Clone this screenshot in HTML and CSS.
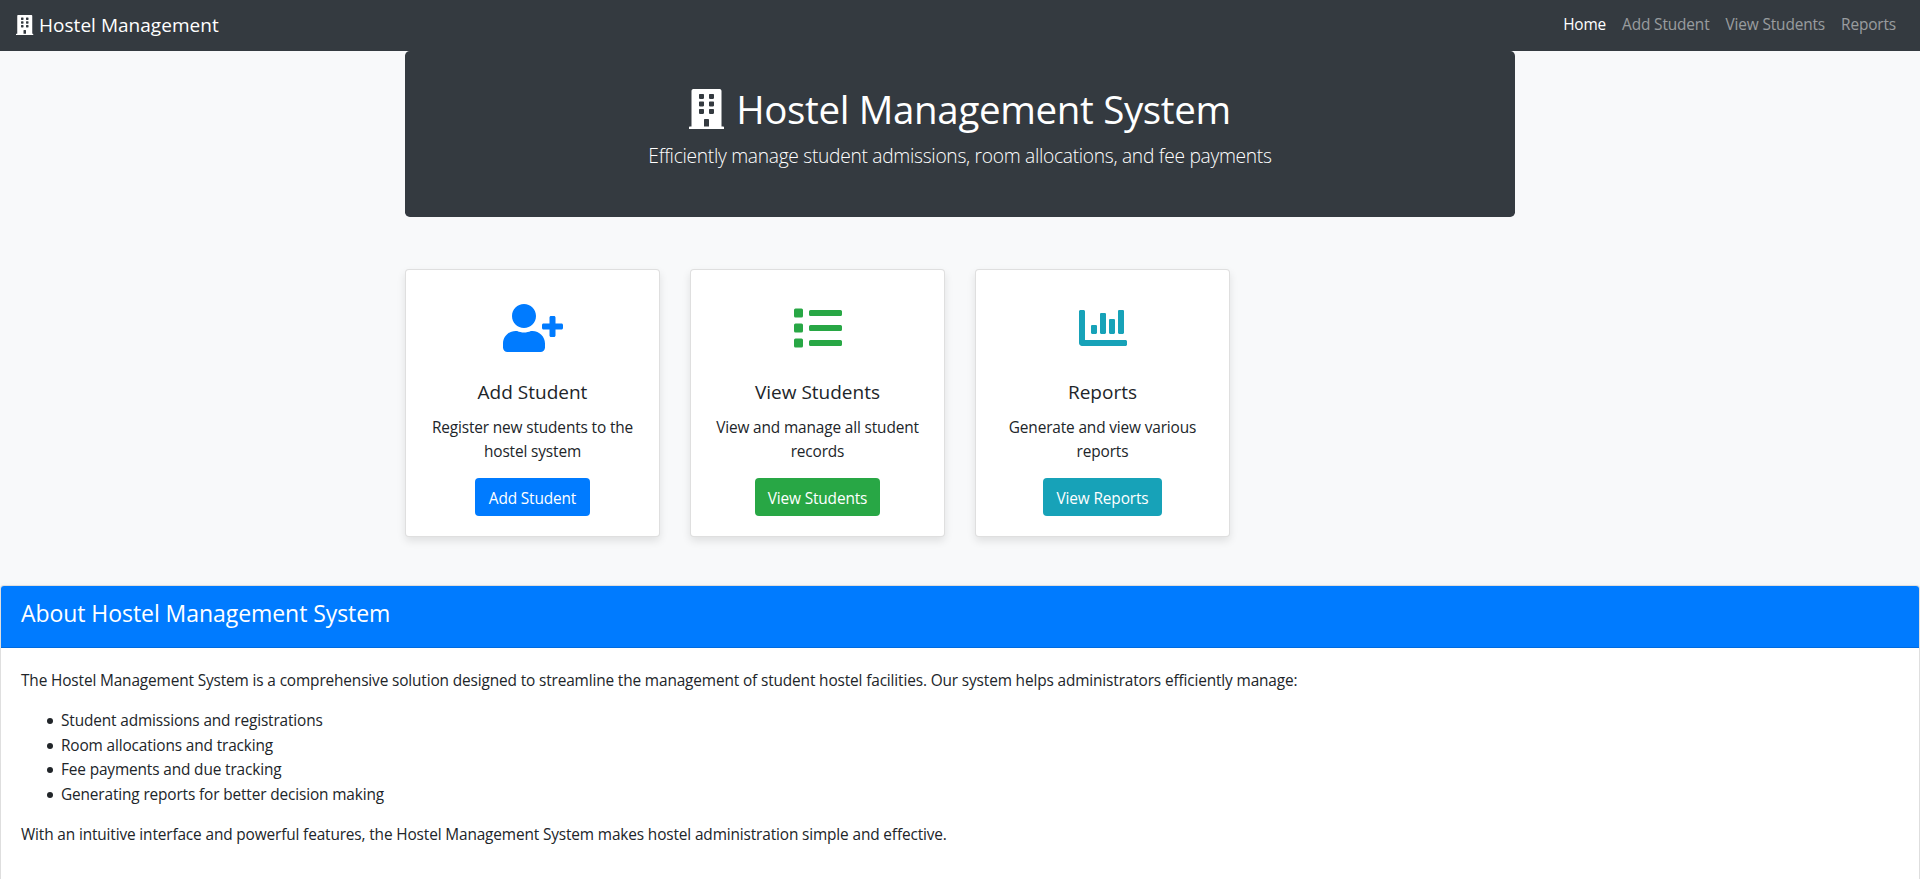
FILE: index.html
```html
<!DOCTYPE html>
<html lang="en">
<head>
<meta charset="utf-8">
<title>Hostel Management</title>
<link rel="stylesheet" href="styles.css">
</head>
<body>
<svg class="sprite" aria-hidden="true">
  <symbol id="building" viewBox="0 0 448 512"><path d="M436 480h-20V24c0-13.255-10.745-24-24-24H56C42.745 0 32 10.745 32 24v456H12c-6.627 0-12 5.373-12 12v20h448v-20c0-6.627-5.373-12-12-12zM128 76c0-6.627 5.373-12 12-12h40c6.627 0 12 5.373 12 12v40c0 6.627-5.373 12-12 12h-40c-6.627 0-12-5.373-12-12V76zm0 96c0-6.627 5.373-12 12-12h40c6.627 0 12 5.373 12 12v40c0 6.627-5.373 12-12 12h-40c-6.627 0-12-5.373-12-12v-40zm52 148h-40c-6.627 0-12-5.373-12-12v-40c0-6.627 5.373-12 12-12h40c6.627 0 12 5.373 12 12v40c0 6.627-5.373 12-12 12zm76 160h-64v-84c0-6.627 5.373-12 12-12h40c6.627 0 12 5.373 12 12v84zm64-172c0 6.627-5.373 12-12 12h-40c-6.627 0-12-5.373-12-12v-40c0-6.627 5.373-12 12-12h40c6.627 0 12 5.373 12 12v40zm0-96c0 6.627-5.373 12-12 12h-40c-6.627 0-12-5.373-12-12v-40c0-6.627 5.373-12 12-12h40c6.627 0 12 5.373 12 12v40zm0-96c0 6.627-5.373 12-12 12h-40c-6.627 0-12-5.373-12-12V76c0-6.627 5.373-12 12-12h40c6.627 0 12 5.373 12 12v40z"/></symbol>
</svg>
<nav class="navbar">
  <a class="brand"><svg class="brand-icon"><use href="#building"/></svg><span>Hostel Management</span></a>
  <div class="nav-links">
    <a class="nav-link active">Home</a>
    <a class="nav-link">Add Student</a>
    <a class="nav-link">View Students</a>
    <a class="nav-link">Reports</a>
  </div>
</nav>
<main class="container">
  <header class="jumbotron">
    <h1 class="hero-title"><svg class="hero-icon"><use href="#building"/></svg><span>Hostel Management System</span></h1>
    <p class="lead">Efficiently manage student admissions, room allocations, and fee payments</p>
  </header>
  <div class="cards">
    <section class="card">
      <svg class="card-icon wide primary" viewBox="0 0 640 512"><path d="M624 208h-64v-64c0-8.800-7.200-16-16-16h-32c-8.800 0-16 7.200-16 16v64h-64c-8.800 0-16 7.200-16 16v32c0 8.800 7.200 16 16 16h64v64c0 8.800 7.200 16 16 16h32c8.800 0 16-7.200 16-16v-64h64c8.800 0 16-7.200 16-16v-32c0-8.800-7.200-16-16-16zm-400 48c70.700 0 128-57.300 128-128S294.700 0 224 0 96 57.300 96 128s57.300 128 128 128zm89.600 32h-16.700c-22.200 10.200-46.900 16-72.900 16s-50.600-5.800-72.900-16h-16.700C60.200 288 0 348.200 0 422.400V464c0 26.500 21.500 48 48 48h352c26.500 0 48-21.500 48-48v-41.600c0-74.200-60.200-134.400-134.400-134.400z"/></svg>
      <h5 class="card-title">Add Student</h5>
      <p class="card-text">Register new students to the<br>hostel system</p>
      <a class="btn btn-add">Add Student</a>
    </section>
    <section class="card">
      <svg class="card-icon success" viewBox="0 0 512 512"><path d="M80 368H16a16 16 0 0 0-16 16v64a16 16 0 0 0 16 16h64a16 16 0 0 0 16-16v-64a16 16 0 0 0-16-16zm0-320H16A16 16 0 0 0 0 64v64a16 16 0 0 0 16 16h64a16 16 0 0 0 16-16V64a16 16 0 0 0-16-16zm0 160H16a16 16 0 0 0-16 16v64a16 16 0 0 0 16 16h64a16 16 0 0 0 16-16v-64a16 16 0 0 0-16-16zm416 176H176a16 16 0 0 0-16 16v32a16 16 0 0 0 16 16h320a16 16 0 0 0 16-16v-32a16 16 0 0 0-16-16zm0-320H176a16 16 0 0 0-16 16v32a16 16 0 0 0 16 16h320a16 16 0 0 0 16-16V80a16 16 0 0 0-16-16zm0 160H176a16 16 0 0 0-16 16v32a16 16 0 0 0 16 16h320a16 16 0 0 0 16-16v-32a16 16 0 0 0-16-16z"/></svg>
      <h5 class="card-title">View Students</h5>
      <p class="card-text">View and manage all student<br>records</p>
      <a class="btn btn-view">View Students</a>
    </section>
    <section class="card">
      <svg class="card-icon info" viewBox="0 0 512 512"><path d="M332.800 320h38.400c6.400 0 12.800-6.400 12.800-12.800V172.800c0-6.400-6.400-12.800-12.800-12.800h-38.400c-6.400 0-12.800 6.400-12.800 12.800v134.400c0 6.400 6.400 12.800 12.800 12.800zm96 0h38.400c6.400 0 12.800-6.400 12.800-12.800V76.800c0-6.400-6.400-12.800-12.800-12.800h-38.400c-6.400 0-12.800 6.400-12.800 12.800v230.400c0 6.400 6.400 12.800 12.800 12.800zm-288 0h38.400c6.400 0 12.800-6.400 12.800-12.800v-70.400c0-6.400-6.400-12.800-12.800-12.800h-38.400c-6.400 0-12.800 6.400-12.800 12.800v70.400c0 6.400 6.400 12.800 12.800 12.800zm96 0h38.400c6.400 0 12.800-6.400 12.800-12.800V108.800c0-6.400-6.400-12.800-12.800-12.800h-38.400c-6.400 0-12.800 6.400-12.800 12.800v198.400c0 6.400 6.400 12.800 12.800 12.800zM496 384H64V80c0-8.840-7.160-16-16-16H16C7.160 64 0 71.160 0 80v336c0 17.670 14.330 32 32 32h464c8.840 0 16-7.160 16-16v-32c0-8.840-7.160-16-16-16z"/></svg>
      <h5 class="card-title">Reports</h5>
      <p class="card-text">Generate and view various<br>reports</p>
      <a class="btn btn-reports">View Reports</a>
    </section>
  </div>
</main>
<section class="about">
  <div class="about-header"><h4 class="about-title">About Hostel Management System</h4></div>
  <div class="about-body">
    <p class="about-text">The Hostel Management System is a comprehensive solution designed to streamline the management of student hostel facilities. Our system helps administrators efficiently manage:</p>
    <ul class="features">
      <li>Student admissions and registrations</li>
      <li>Room allocations and tracking</li>
      <li>Fee payments and due tracking</li>
      <li>Generating reports for better decision making</li>
    </ul>
    <p class="about-text">With an intuitive interface and powerful features, the Hostel Management System makes hostel administration simple and effective.</p>
  </div>
</section>
</body>
</html>
```
FILE: styles.css
```css
* { box-sizing: border-box; }
html, body { height: 100%; }
body {
  display: flex;
  flex-direction: column;
  margin: 0;
  overflow: hidden;
  background: #f8f9fa;
  color: #212529;
  font-family: "Open Sans", "Noto Sans", sans-serif;
  font-size: 15.4px;
  letter-spacing: -0.138px;
  line-height: 24px;
}
h1, h4, h5, p, ul { margin: 0; font-weight: 400; }
svg { display: block; fill: currentColor; flex: none; }
.sprite { display: none; }

.navbar {
  display: flex;
  flex: none;
  justify-content: space-between;
  align-items: center;
  height: 51px;
  padding: 0 16px;
  background: #343a40;
  color: #fff;
}
.brand {
  display: flex;
  align-items: center;
  gap: 5.5px;
  padding-bottom: 2px;
  font-size: 19px;
  letter-spacing: 0.03px;
}
.brand-icon { width: 17.5px; height: 20px; }
.nav-links { display: flex; padding-bottom: 2px; }
.nav-link { padding: 0 8px; color: rgba(255, 255, 255, .5); }
.nav-link.active { color: #fff; }

.container { flex: none; width: 1110px; margin: 0 auto; }
.jumbotron {
  height: 166px;
  padding: 32px;
  border-radius: 4.8px;
  background: #343a40;
  color: #fff;
  text-align: center;
}
.hero-title {
  display: flex;
  justify-content: center;
  gap: 12px;
  height: 48px;
  margin-bottom: 8px;
  font-size: 38.5px;
  letter-spacing: -0.34px;
  line-height: 52px;
}
.hero-icon { width: 35px; height: 40px; margin-top: 6px; }
.lead { font-size: 19.2px; font-weight: 300; letter-spacing: -0.29px; line-height: 33px; }

.cards { display: flex; gap: 30px; margin-top: 52px; }
.card {
  display: flex;
  flex-direction: column;
  align-items: center;
  width: 255px;
  height: 268px;
  padding: 34px 20px 20px;
  border: 1px solid rgba(0, 0, 0, .125);
  border-radius: 4px;
  background: #fff;
  box-shadow: 0 4px 8px rgba(0, 0, 0, .1);
  text-align: center;
}
.card-icon { width: 48px; height: 48px; margin-bottom: 26px; }
.card-icon.wide { width: 60px; }
.primary { color: #007bff; }
.success { color: #28a745; }
.info { color: #17a2b8; }
.card-title { height: 24px; margin-bottom: 14px; font-size: 19px; letter-spacing: 0; line-height: 28px; }
.card-text { margin-bottom: 14px; white-space: nowrap; }
.btn { height: 38px; border-radius: 4px; color: #fff; line-height: 41px; }
.btn-add { width: 115px; background: #007bff; }
.btn-view { width: 125px; background: #28a745; }
.btn-reports { width: 119px; background: #17a2b8; }

.about {
  flex: 1;
  min-height: 0;
  margin-top: 48px;
  border: 1px solid rgba(0, 0, 0, .125);
  border-bottom: 0;
  border-radius: 4px 4px 0 0;
  background: #fff;
  box-shadow: 0 4px 8px rgba(0, 0, 0, .1);
}
.about-header {
  height: 62px;
  padding: 12px 20px;
  border-bottom: 1px solid rgba(0, 0, 0, .125);
  border-radius: 3px 3px 0 0;
  background: #007bff;
  color: #fff;
}
.about-title { font-size: 23px; letter-spacing: -0.06px; line-height: 31px; }
.about-body { padding: 21px 20px 0; }
.about-text { white-space: nowrap; }
.features { margin: 16px 0; padding-left: 26px; line-height: 24.5px; list-style: none; }
.features li { display: flex; align-items: center; gap: 8px; }
.features li::before {
  content: "";
  width: 6px;
  height: 6px;
  border-radius: 50%;
  background: #212529;
}
```
